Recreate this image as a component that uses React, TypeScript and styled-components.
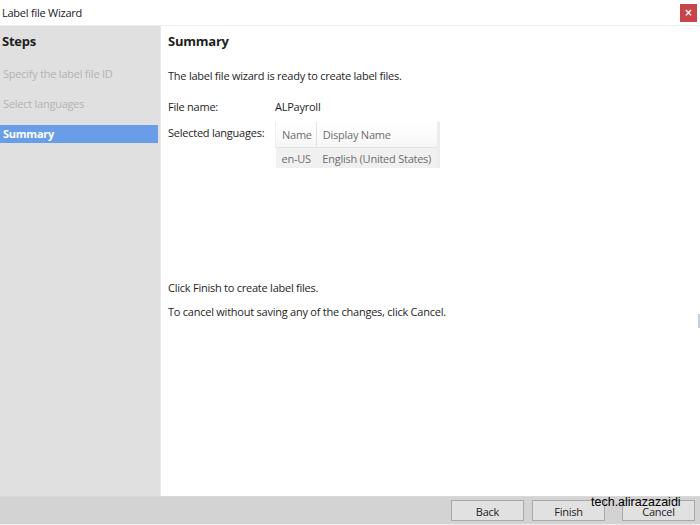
import * as React from "react";
import styled, { createGlobalStyle } from "styled-components";

const GlobalStyle = createGlobalStyle`
  html, body {
    margin: 0;
    padding: 0;
    background: #ffffff;
  }
  body {
    font-family: "Open Sans", "Noto Sans", sans-serif;
    font-size: 11px;
    letter-spacing: -0.24px;
    color: #1e1e1e;
  }
`;

const Window = styled.div`
  width: 700px;
  height: 525px;
  display: flex;
  flex-direction: column;
  overflow: hidden;
  position: relative;
`;

const TitleBar = styled.header`
  height: 26px;
  display: flex;
  align-items: center;
  justify-content: space-between;
  padding: 0 3px 0 2px;
  border-bottom: 1px solid #f0f0f0;
  box-sizing: border-box;
`;

const Title = styled.span`
  color: #222;
`;

const CloseButton = styled.button`
  width: 17px;
  height: 18px;
  border: none;
  background: #c9434a;
  color: #ffffff;
  font-size: 10px;
  font-weight: bold;
  padding: 0;
  display: flex;
  align-items: center;
  justify-content: center;
  font-family: "DejaVu Sans", sans-serif;
`;

const Body = styled.div`
  flex: 1;
  display: flex;
`;

const Sidebar = styled.nav`
  width: 160px;
  background: #e0e0e0;
  border-right: 1px solid #e8e8e8;
  display: flex;
  flex-direction: column;
  padding-top: 5px;
`;

const SideHeading = styled.div`
  font-weight: bold;
  font-size: 13px;
  padding-left: 2px;
  height: 20px;
  line-height: 20px;
  margin-bottom: 2px;
`;

const Step = styled.div<{ $active?: boolean }>`
  height: 18px;
  line-height: 18px;
  margin-top: 12px;
  width: 158px;
  padding-left: 3px;
  box-sizing: border-box;
  color: ${(p) => (p.$active ? "#ffffff" : "#b4b4b4")};
  background: ${(p) => (p.$active ? "#6a9de8" : "transparent")};
  font-weight: ${(p) => (p.$active ? "bold" : "normal")};
`;

const Main = styled.main`
  flex: 1;
  padding: 5px 0 0 7px;
  display: flex;
  flex-direction: column;
`;

const Heading = styled.h1`
  margin: 0;
  font-size: 13px;
  font-weight: bold;
  height: 20px;
  line-height: 20px;
`;

const Para = styled.p<{ $top: number }>`
  margin: ${(p) => p.$top}px 0 0 0;
  height: 18px;
  line-height: 18px;
`;

const Field = styled.div<{ $top: number }>`
  display: flex;
  margin-top: ${(p) => p.$top}px;
`;

const Label = styled.span`
  width: 107px;
  height: 18px;
  line-height: 18px;
`;

const Value = styled.span`
  height: 18px;
  line-height: 18px;
`;

const Table = styled.table`
  border-collapse: collapse;
  margin-top: -2px;
  color: #6e6e6e;
  border-right: 3px solid #ececec;
`;

const Th = styled.th`
  font-weight: normal;
  text-align: left;
  height: 25px;
  padding: 0 6px;
  background: linear-gradient(#ffffff, #f6f6f6);
  border-right: 1px solid #e2e2e2;
  border-bottom: 1px solid #e2e2e2;
  &:first-child {
    border-left: 1px solid #f0f0f0;
    padding-right: 4px;
  }
  &:last-child {
    padding-right: 8px;
  }
`;

const Td = styled.td`
  height: 20px;
  padding: 0 6px;
  background: #f0f0f0;
  &:first-child {
    padding-right: 4px;
  }
`;

const Spacer = styled.div`
  height: 111px;
`;

const Footer = styled.footer`
  height: 29px;
  background: #d3d3d3;
  border-top: 1px solid #d9d9d9;
  border-bottom: 1px solid #ececec;
  box-sizing: border-box;
  display: flex;
  align-items: center;
  justify-content: flex-end;
  padding-right: 5px;
  position: relative;
`;

const WizardButton = styled.button<{ $gap: number }>`
  width: 73px;
  height: 21px;
  margin-left: ${(p) => p.$gap}px;
  background: #e1e1e1;
  border: 1px solid #a8a8a8;
  font-family: "Open Sans", "Noto Sans", sans-serif;
  font-size: 11px;
  letter-spacing: -0.24px;
  color: #222;
  padding: 0;
  padding-top: 2px;
`;

const Watermark = styled.span`
  position: absolute;
  left: 591px;
  top: -2px;
  font-family: "Liberation Sans", Arial, sans-serif;
  font-size: 12.5px;
  letter-spacing: 0;
  color: #000;
`;

const EdgeMark = styled.span`
  position: absolute;
  right: 0;
  top: 314px;
  width: 2px;
  height: 14px;
  background: #c8cfdb;
`;

export default function App() {
  return (
    <>
      <GlobalStyle />
      <Window>
        <TitleBar>
          <Title>Label file Wizard</Title>
          <CloseButton>×</CloseButton>
        </TitleBar>
        <Body>
          <Sidebar>
            <SideHeading>Steps</SideHeading>
            <Step>Specify the label file ID</Step>
            <Step>Select languages</Step>
            <Step $active>Summary</Step>
          </Sidebar>
          <Main>
            <Heading>Summary</Heading>
            <Para $top={16}>The label file wizard is ready to create label files.</Para>
            <Field $top={13}>
              <Label>File name:</Label>
              <Value>ALPayroll</Value>
            </Field>
            <Field $top={8}>
              <Label>Selected languages:</Label>
              <Table>
                <thead>
                  <tr>
                    <Th>Name</Th>
                    <Th>Display Name</Th>
                  </tr>
                </thead>
                <tbody>
                  <tr>
                    <Td>en-US</Td>
                    <Td>English (United States)</Td>
                  </tr>
                </tbody>
              </Table>
            </Field>
            <Spacer />
            <Para $top={0}>Click Finish to create label files.</Para>
            <Para $top={6}>To cancel without saving any of the changes, click Cancel.</Para>
          </Main>
        </Body>
        <Footer>
          <WizardButton $gap={0}>Back</WizardButton>
          <WizardButton $gap={8}>Finish</WizardButton>
          <WizardButton $gap={17}>Cancel</WizardButton>
          <Watermark>tech.alirazazaidi</Watermark>
        </Footer>
        <EdgeMark />
      </Window>
    </>
  );
}
